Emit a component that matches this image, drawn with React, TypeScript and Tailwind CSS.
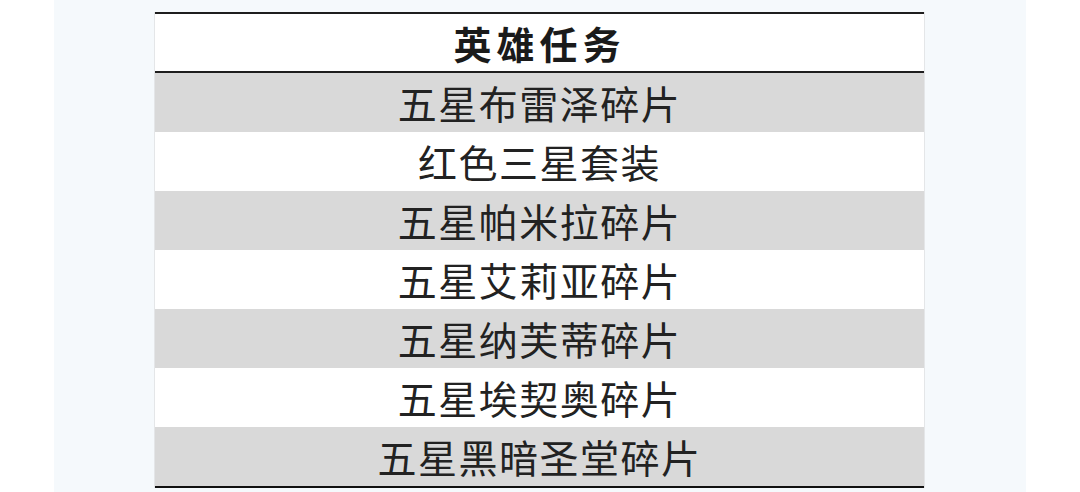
const rows = [
  '五星布雷泽碎片',
  '红色三星套装',
  '五星帕米拉碎片',
  '五星艾莉亚碎片',
  '五星纳芙蒂碎片',
  '五星埃契奥碎片',
  '五星黑暗圣堂碎片',
];

const cjk = "font-['Noto_Sans_CJK_SC','Noto_Sans',sans-serif]";

export default function App() {
  return (
    <div className="w-[1080px] h-[492px] bg-white flex justify-center overflow-hidden">
      <div className="w-[972px] h-full bg-[#f5f9fc] pt-[12px] pl-[100px]">
        <div className={`w-[771px] border-x border-[#e4e6e8] ${cjk}`}>
          <div className="h-[61px] bg-white border-y-2 border-[#1e1e1e] flex items-center justify-center text-[38px] font-bold text-[#1a1a1a] tracking-[5px] leading-none">
            英雄任务
          </div>
          {rows.map((r, i) => {
            const last = i === rows.length - 1;
            return (
              <div
                key={r}
                className={`flex items-center justify-center text-[39px] text-[#222] tracking-[1.5px] leading-none ${
                  i % 2 === 0 ? 'bg-[#d9d9d9]' : 'bg-white'
                } ${last ? 'h-[61px] border-b-2 border-[#111]' : 'h-[59px]'}`}
              >
                {r}
              </div>
            );
          })}
        </div>
      </div>
    </div>
  );
}
